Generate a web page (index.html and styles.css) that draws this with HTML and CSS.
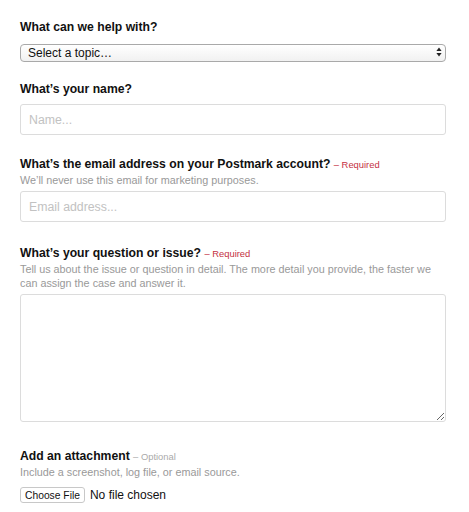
FILE: index.html
```html
<!DOCTYPE html>
<html lang="en">
<head>
<meta charset="utf-8">
<title>Support</title>
<link rel="stylesheet" href="styles.css">
</head>
<body>
<form class="form">
  <div class="field field-topic">
    <label class="label" for="topic">What can we help with?</label>
    <div class="select-wrap">
      <select id="topic" class="select">
        <option>Select a topic…</option>
      </select>
      <svg class="select-arrows" width="6" height="10" viewBox="0 0 6 10" aria-hidden="true">
        <path d="M3 0.5 L5.6 4 L0.4 4 Z" fill="#222"/>
        <path d="M3 9.5 L5.6 6 L0.4 6 Z" fill="#222"/>
      </svg>
    </div>
  </div>

  <div class="field field-name">
    <label class="label" for="name">What’s your name?</label>
    <input id="name" class="input" type="text" placeholder="Name...">
  </div>

  <div class="field field-email">
    <label class="label" for="email">What’s the email address on your Postmark account? <span class="req">– Required</span></label>
    <p class="hint">We’ll never use this email for marketing purposes.</p>
    <input id="email" class="input" type="email" placeholder="Email address...">
  </div>

  <div class="field field-question">
    <label class="label" for="question">What’s your question or issue? <span class="req">– Required</span></label>
    <p class="hint">Tell us about the issue or question in detail. The more detail you provide, the faster we can assign the case and answer it.</p>
    <textarea id="question" class="textarea"></textarea>
  </div>

  <div class="field field-attach">
    <label class="label" for="file">Add an attachment <span class="opt">– Optional</span></label>
    <p class="hint">Include a screenshot, log file, or email source.</p>
    <input id="file" class="file" type="file">
  </div>
</form>
</body>
</html>
```

FILE: styles.css
```css
html, body {
  margin: 0;
  padding: 0;
  background: #fff;
}

body {
  font-family: "Liberation Sans", Arial, Helvetica, sans-serif;
  color: #111;
}

.form {
  width: 426px;
  padding: 19px 0 0 20px;
  display: flex;
  flex-direction: column;
}

.field {
  display: flex;
  flex-direction: column;
}

.label {
  display: block;
  font-size: 12.2px;
  font-weight: bold;
  line-height: 16px;
  color: #111;
}

.req {
  font-weight: normal;
  font-size: 9.4px;
  color: #c4303f;
}

.opt {
  font-weight: normal;
  font-size: 9.4px;
  color: #aaa;
}

.hint {
  margin: 0;
  font-size: 10.8px;
  line-height: 14px;
  color: #999;
}

.field-topic .label { margin-bottom: 8px; }
.field-name { margin-top: 19px; }
.field-name .label { margin-bottom: 7px; }
.field-email { margin-top: 21px; }
.field-email .hint { margin-bottom: 4px; }
.field-question { margin-top: 23px; }
.field-question .hint { margin-bottom: 4px; }
.field-attach { margin-top: 26px; }
.field-attach .hint { margin-bottom: 8px; }

.select-wrap {
  position: relative;
  width: 426px;
}

.select {
  appearance: none;
  -webkit-appearance: none;
  width: 426px;
  height: 18px;
  margin: 0;
  padding: 0 20px 0 7px;
  border: 1px solid #a9a9a9;
  border-radius: 4px;
  background: linear-gradient(#ffffff, #f1f1f1);
  font-family: "Liberation Sans", Arial, sans-serif;
  font-size: 12px;
  line-height: 16px;
  color: #111;
  box-sizing: border-box;
}

.select-arrows {
  position: absolute;
  right: 4px;
  top: 4px;
}

.input {
  width: 426px;
  height: 31px;
  margin: 0;
  padding: 0 8px;
  box-sizing: border-box;
  border: 1px solid #dcdcdc;
  border-radius: 3px;
  font-family: "Liberation Sans", Arial, sans-serif;
  font-size: 12.3px;
  color: #111;
  background: #fff;
}

.input::placeholder {
  color: #c2c2c2;
}

.textarea {
  width: 426px;
  height: 128px;
  margin: 0;
  padding: 6px 8px;
  box-sizing: border-box;
  border: 1px solid #dcdcdc;
  border-radius: 3px;
  font-family: "Liberation Sans", Arial, sans-serif;
  font-size: 12.3px;
  background: #fff;
}

.file {
  font-family: "Liberation Sans", Arial, sans-serif;
  font-size: 12px;
  color: #111;
  margin: 0;
  padding: 0;
  width: 300px;
}

.file::file-selector-button {
  font-family: "Liberation Sans", Arial, sans-serif;
  font-size: 10.3px;
  height: 16px;
  padding: 0 4px;
  margin: 0 5px 0 0;
  border: 1px solid #c8c8c8;
  border-radius: 3px;
  background: #fff;
  color: #111;
}
```
